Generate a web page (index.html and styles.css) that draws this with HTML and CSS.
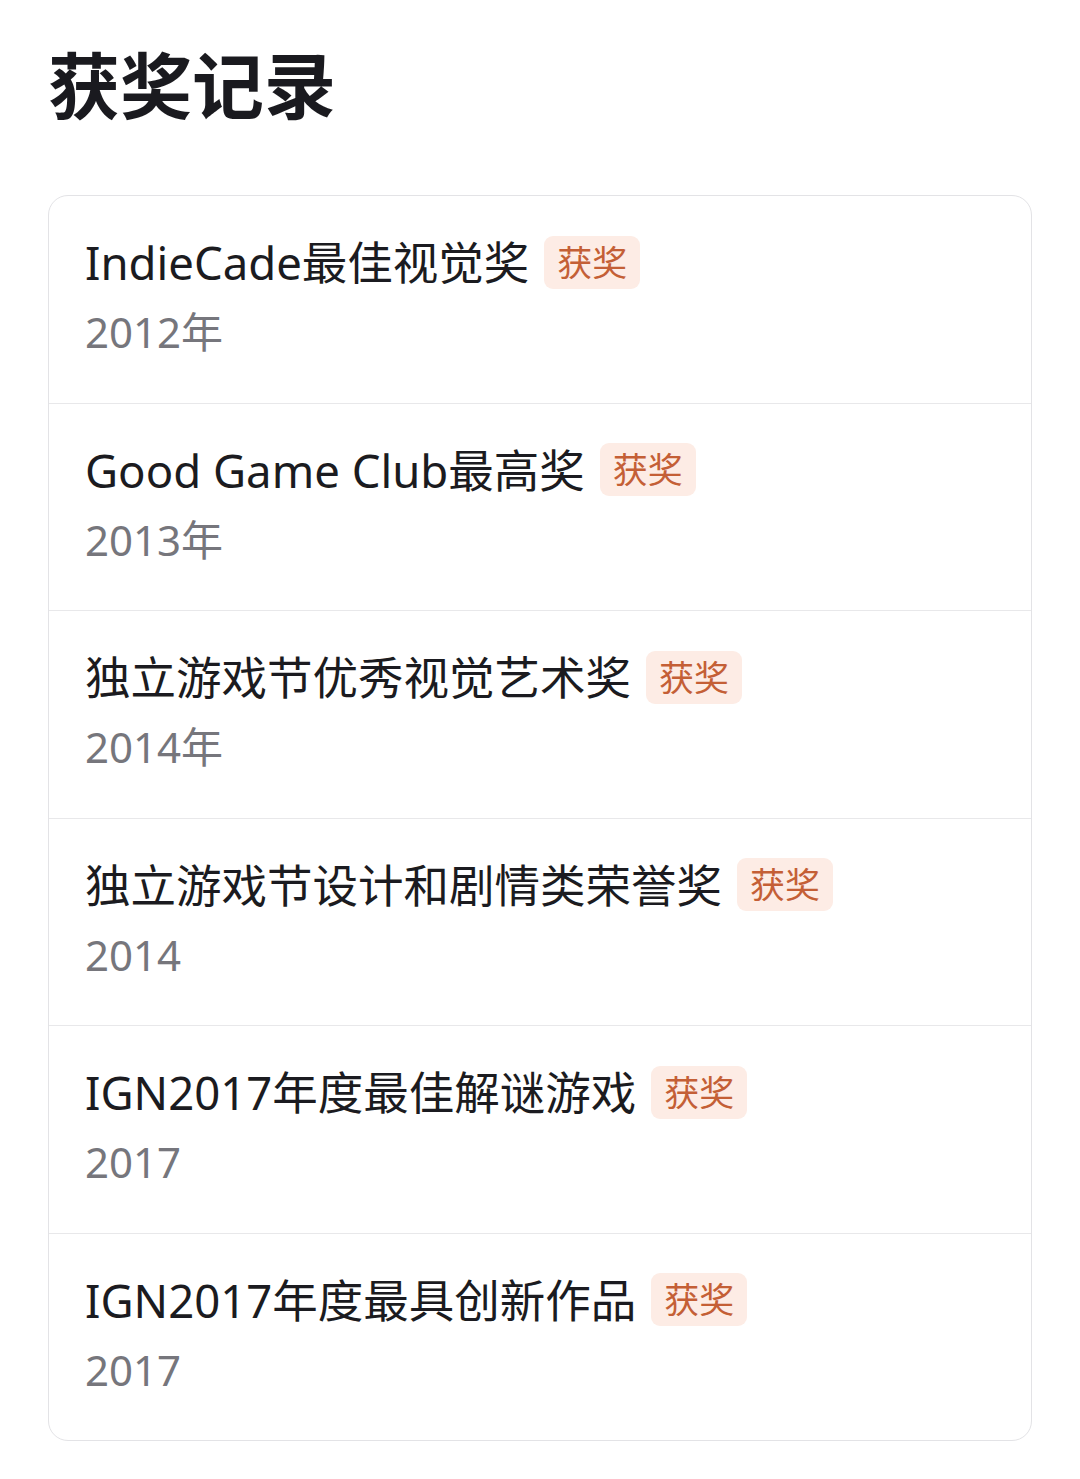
FILE: index.html
```html
<!DOCTYPE html>
<html lang="zh-CN">
<head>
    <meta charset="UTF-8">
    <meta name="viewport" content="width=device-width, initial-scale=1.0">
    <title>获奖记录</title>
    <link rel="stylesheet" href="styles.css">
</head>
<body>
    <div class="page">
        <h1 class="page-title">获奖记录</h1>

        <ul class="award-list">
            <li class="award">
                <div class="award-head">
                    <span class="award-name">IndieCade最佳视觉奖</span>
                    <span class="badge">获奖</span>
                </div>
                <div class="award-year">2012年</div>
            </li>
            <li class="award">
                <div class="award-head">
                    <span class="award-name">Good Game Club最高奖</span>
                    <span class="badge">获奖</span>
                </div>
                <div class="award-year">2013年</div>
            </li>
            <li class="award">
                <div class="award-head">
                    <span class="award-name">独立游戏节优秀视觉艺术奖</span>
                    <span class="badge">获奖</span>
                </div>
                <div class="award-year">2014年</div>
            </li>
            <li class="award">
                <div class="award-head">
                    <span class="award-name">独立游戏节设计和剧情类荣誉奖</span>
                    <span class="badge">获奖</span>
                </div>
                <div class="award-year">2014</div>
            </li>
            <li class="award">
                <div class="award-head">
                    <span class="award-name">IGN2017年度最佳解谜游戏</span>
                    <span class="badge">获奖</span>
                </div>
                <div class="award-year">2017</div>
            </li>
            <li class="award">
                <div class="award-head">
                    <span class="award-name">IGN2017年度最具创新作品</span>
                    <span class="badge">获奖</span>
                </div>
                <div class="award-year">2017</div>
            </li>
        </ul>
    </div>
</body>
</html>
```

FILE: styles.css
```css
/* General */
* {
    box-sizing: border-box;
    margin: 0;
    padding: 0;
}

body {
    background: #ffffff;
    font-family: "Noto Sans", "Noto Sans CJK SC", sans-serif;
    color: #1b1b20;
}

.page {
    padding: 39px 48px 40px 48px;
}

.page-title {
    font-size: 72px;
    font-weight: 700;
    line-height: 92px;
    color: #1a1a1f;
    margin-bottom: 64px;
}

/* Award list */
.award-list {
    list-style: none;
    border: 1px solid #e3e3e6;
    border-radius: 20px;
}

.award {
    padding: 36px 36px 40.5px 36px;
    border-bottom: 1px solid #e8e8ea;
    display: flex;
    flex-direction: column;
    gap: 10px;
}

.award:last-child {
    border-bottom: none;
}

.award-head {
    display: flex;
    align-items: center;
    gap: 15px;
    height: 60px;
}

.award-name {
    font-size: 45.5px;
    line-height: 60px;
    color: #1b1b20;
}

.badge {
    background: #fdece5;
    color: #c45f36;
    font-size: 35px;
    line-height: 53px;
    padding: 0 13px;
    border-radius: 9px;
}

.award-year {
    font-size: 42px;
    line-height: 60px;
    color: #76767c;
}
```
